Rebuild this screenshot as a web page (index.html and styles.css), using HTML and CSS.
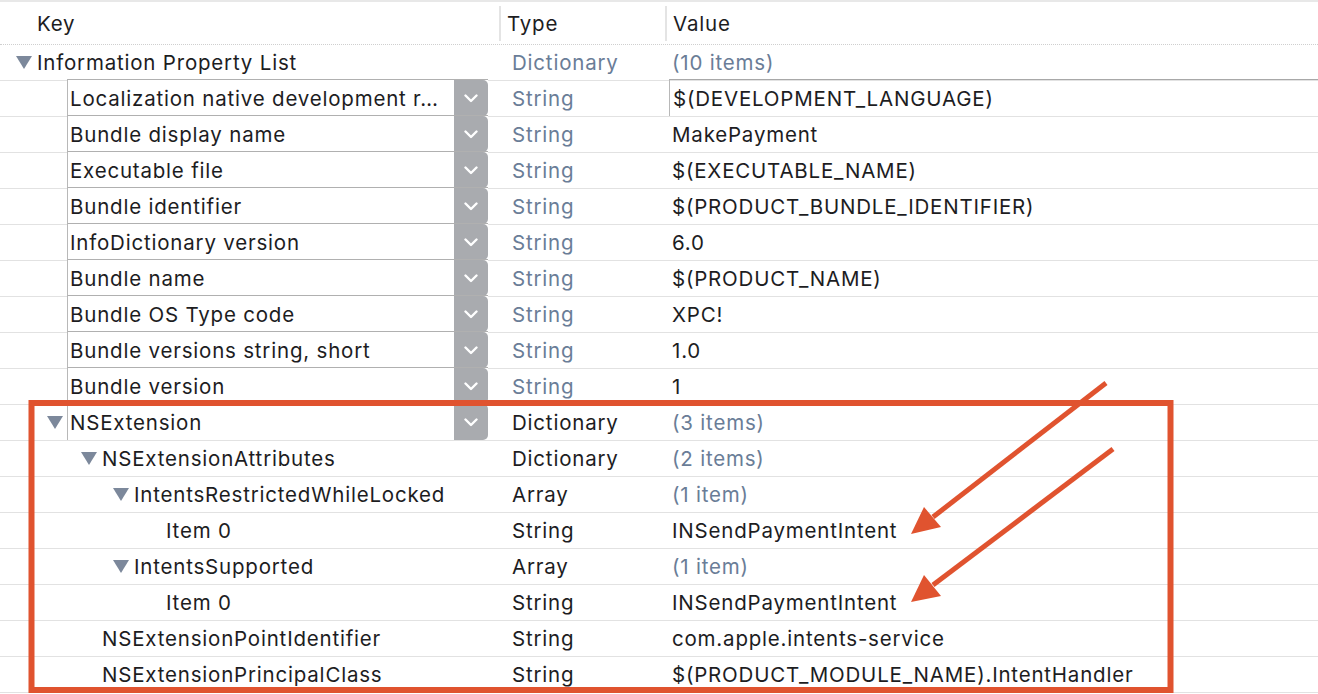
FILE: index.html
```html
<!DOCTYPE html>
<html>
<head>
<meta charset="utf-8">
<link rel="stylesheet" href="styles.css">
</head>
<body>
<div class="plist">
  <div class="head">
    <div class="hcell hkey">Key</div>
    <div class="hcell hsep">Type</div>
    <div class="hcell hsep">Value</div>
  </div>

  <div class="row">
    <div class="k d0"><span class="tri"><svg width="16" height="13" viewBox="0 0 16 13"><polygon points="0,0 16,0 8,13"/></svg></span>Information Property List</div>
    <div class="t muted">Dictionary</div>
    <div class="v muted">(10 items)</div>
  </div>

  <div class="row">
    <div class="k pk"><div class="popup"><span class="ptext">Localization native development r…</span><span class="pbtn"><svg width="14" height="9" viewBox="0 0 14 9"><polyline points="1.5,1.5 7,7 12.5,1.5"/></svg></span></div></div>
    <div class="t muted">String</div>
    <div class="v vbox">$(DEVELOPMENT_LANGUAGE)</div>
  </div>

  <div class="row">
    <div class="k pk"><div class="popup"><span class="ptext">Bundle display name</span><span class="pbtn"><svg width="14" height="9" viewBox="0 0 14 9"><polyline points="1.5,1.5 7,7 12.5,1.5"/></svg></span></div></div>
    <div class="t muted">String</div>
    <div class="v">MakePayment</div>
  </div>

  <div class="row">
    <div class="k pk"><div class="popup"><span class="ptext">Executable file</span><span class="pbtn"><svg width="14" height="9" viewBox="0 0 14 9"><polyline points="1.5,1.5 7,7 12.5,1.5"/></svg></span></div></div>
    <div class="t muted">String</div>
    <div class="v">$(EXECUTABLE_NAME)</div>
  </div>

  <div class="row">
    <div class="k pk"><div class="popup"><span class="ptext">Bundle identifier</span><span class="pbtn"><svg width="14" height="9" viewBox="0 0 14 9"><polyline points="1.5,1.5 7,7 12.5,1.5"/></svg></span></div></div>
    <div class="t muted">String</div>
    <div class="v">$(PRODUCT_BUNDLE_IDENTIFIER)</div>
  </div>

  <div class="row">
    <div class="k pk"><div class="popup"><span class="ptext">InfoDictionary version</span><span class="pbtn"><svg width="14" height="9" viewBox="0 0 14 9"><polyline points="1.5,1.5 7,7 12.5,1.5"/></svg></span></div></div>
    <div class="t muted">String</div>
    <div class="v">6.0</div>
  </div>

  <div class="row">
    <div class="k pk"><div class="popup"><span class="ptext">Bundle name</span><span class="pbtn"><svg width="14" height="9" viewBox="0 0 14 9"><polyline points="1.5,1.5 7,7 12.5,1.5"/></svg></span></div></div>
    <div class="t muted">String</div>
    <div class="v">$(PRODUCT_NAME)</div>
  </div>

  <div class="row">
    <div class="k pk"><div class="popup"><span class="ptext">Bundle OS Type code</span><span class="pbtn"><svg width="14" height="9" viewBox="0 0 14 9"><polyline points="1.5,1.5 7,7 12.5,1.5"/></svg></span></div></div>
    <div class="t muted">String</div>
    <div class="v">XPC!</div>
  </div>

  <div class="row">
    <div class="k pk"><div class="popup"><span class="ptext">Bundle versions string, short</span><span class="pbtn"><svg width="14" height="9" viewBox="0 0 14 9"><polyline points="1.5,1.5 7,7 12.5,1.5"/></svg></span></div></div>
    <div class="t muted">String</div>
    <div class="v">1.0</div>
  </div>

  <div class="row">
    <div class="k pk"><div class="popup"><span class="ptext">Bundle version</span><span class="pbtn"><svg width="14" height="9" viewBox="0 0 14 9"><polyline points="1.5,1.5 7,7 12.5,1.5"/></svg></span></div></div>
    <div class="t muted">String</div>
    <div class="v">1</div>
  </div>

  <div class="row">
    <div class="k pk1"><span class="tri"><svg width="16" height="13" viewBox="0 0 16 13"><polygon points="0,0 16,0 8,13"/></svg></span><div class="popup"><span class="ptext">NSExtension</span><span class="pbtn"><svg width="14" height="9" viewBox="0 0 14 9"><polyline points="1.5,1.5 7,7 12.5,1.5"/></svg></span></div></div>
    <div class="t">Dictionary</div>
    <div class="v muted">(3 items)</div>
  </div>

  <div class="row">
    <div class="k d2"><span class="tri"><svg width="16" height="13" viewBox="0 0 16 13"><polygon points="0,0 16,0 8,13"/></svg></span>NSExtensionAttributes</div>
    <div class="t">Dictionary</div>
    <div class="v muted">(2 items)</div>
  </div>

  <div class="row">
    <div class="k d3"><span class="tri"><svg width="16" height="13" viewBox="0 0 16 13"><polygon points="0,0 16,0 8,13"/></svg></span>IntentsRestrictedWhileLocked</div>
    <div class="t">Array</div>
    <div class="v muted">(1 item)</div>
  </div>

  <div class="row">
    <div class="k l4">Item 0</div>
    <div class="t">String</div>
    <div class="v">INSendPaymentIntent</div>
  </div>

  <div class="row">
    <div class="k d3"><span class="tri"><svg width="16" height="13" viewBox="0 0 16 13"><polygon points="0,0 16,0 8,13"/></svg></span>IntentsSupported</div>
    <div class="t">Array</div>
    <div class="v muted">(1 item)</div>
  </div>

  <div class="row">
    <div class="k l4">Item 0</div>
    <div class="t">String</div>
    <div class="v">INSendPaymentIntent</div>
  </div>

  <div class="row">
    <div class="k l2">NSExtensionPointIdentifier</div>
    <div class="t">String</div>
    <div class="v">com.apple.intents-service</div>
  </div>

  <div class="row">
    <div class="k l2">NSExtensionPrincipalClass</div>
    <div class="t">String</div>
    <div class="v">$(PRODUCT_MODULE_NAME).IntentHandler</div>
  </div>
</div>

<svg class="annot" width="1318" height="694" viewBox="0 0 1318 694">
  <rect x="31.5" y="403" width="1139" height="287" fill="none" stroke="#e0532f" stroke-width="6"/>
  <line x1="1106" y1="383" x2="933" y2="517" stroke="#e0532f" stroke-width="5"/>
  <polygon points="911,534 924,507 941,527" fill="#e0532f"/>
  <line x1="1113" y1="449" x2="933" y2="585" stroke="#e0532f" stroke-width="5"/>
  <polygon points="911,602 924,575 941,596" fill="#e0532f"/>
</svg>
</body>
</html>
```

FILE: styles.css
```css
* { box-sizing: border-box; }
html, body { margin: 0; padding: 0; background: #fff; }
body {
  width: 1318px;
  height: 694px;
  overflow: hidden;
  position: relative;
  font-family: "Inter", "Liberation Sans", sans-serif;
  font-size: 20.5px;
  letter-spacing: 0.8px;
  color: #1d1d1f;
}
.plist { width: 1318px; }

.head {
  display: grid;
  grid-template-columns: 499px 166px 1fr;
  height: 45px;
  border-top: 2px solid #e8e8e8;
  border-bottom: 1px dotted #cfcfcf;
  align-items: center;
}
.hcell { height: 35px; display: flex; align-items: center; padding-left: 6px; }
.hkey { padding-left: 37px; }
.hsep { border-left: 2px solid #e4e4e4; }

.row {
  display: grid;
  grid-template-columns: 499px 166px 1fr;
  height: 36px;
  border-bottom: 1px solid #e2e2e2;
  align-items: center;
  white-space: nowrap;
}
.k, .t, .v { height: 35px; display: flex; align-items: center; overflow: visible; }
.t { padding-left: 13px; }
.v { padding-left: 7px; }
.muted { color: #6a7d97; }

.tri { display: inline-flex; width: 16px; margin-right: 5px; }
.tri svg { fill: #7c889b; }
.d0 { padding-left: 16px; }
.d2 { padding-left: 81px; }
.d3 { padding-left: 113px; }
.l2 { padding-left: 102px; }
.l4 { padding-left: 166px; }

.pk { padding-left: 67px; }
.pk1 { padding-left: 47px; }
.pk1 .tri { margin-right: 4px; }

.popup {
  display: flex;
  align-items: stretch;
  width: 421px;
  height: 37px;
  margin-top: -2px;
  border-top: 1px solid #b0b0b0;
  border-left: 1px solid #b8b8b8;
  background: #fff;
}
.ptext {
  flex: 1;
  padding-left: 2px;
  display: flex;
  align-items: center;
  overflow: hidden;
}
.pbtn {
  width: 34px;
  flex: none;
  display: flex;
  align-items: center;
  justify-content: center;
  border-radius: 0 5px 5px 0;
  background-color: #a9abaf;
  background-image: radial-gradient(circle, #8594ac 35%, transparent 40%);
  background-size: 2px 2px;
}
.pbtn svg { fill: none; stroke: #fff; stroke-width: 2.4; stroke-linecap: round; stroke-linejoin: round; }

.vbox {
  margin-left: 4px;
  padding-left: 3px;
  height: 37px;
  margin-top: -2px;
  border-top: 1px solid #a8a8a8;
  border-left: 1px solid #b8b8b8;
}

.annot { position: absolute; left: 0; top: 0; pointer-events: none; }
```
